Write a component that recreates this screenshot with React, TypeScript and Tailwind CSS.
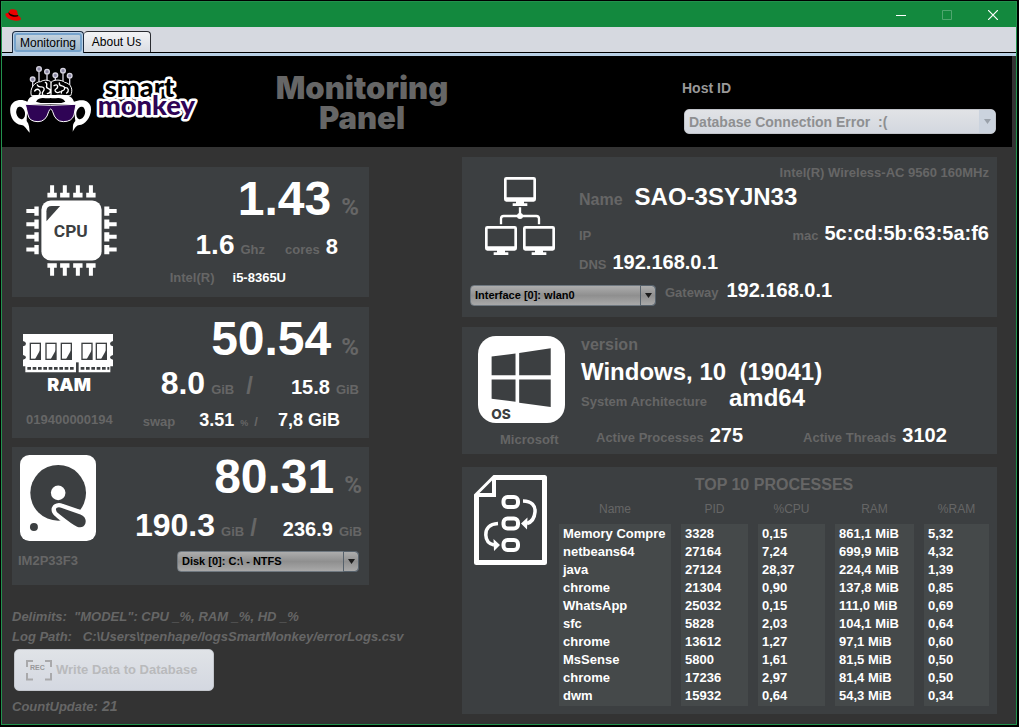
import type { ReactNode } from "react";

type Process = [name: string, pid: string, cpu: string, ram: string, ramShare: string];

const processes: Process[] = [
  ["Memory Compre", "3328", "0,15", "861,1 MiB", "5,32"],
  ["netbeans64", "27164", "7,24", "699,9 MiB", "4,32"],
  ["java", "27124", "28,37", "224,4 MiB", "1,39"],
  ["chrome", "21304", "0,90", "137,8 MiB", "0,85"],
  ["WhatsApp", "25032", "0,15", "111,0 MiB", "0,69"],
  ["sfc", "5828", "2,03", "104,1 MiB", "0,64"],
  ["chrome", "13612", "1,27", "97,1 MiB", "0,60"],
  ["MsSense", "5800", "1,61", "81,5 MiB", "0,50"],
  ["chrome", "17236", "2,97", "81,4 MiB", "0,50"],
  ["dwm", "15932", "0,64", "54,3 MiB", "0,34"],
];

function HatIcon() {
  return (
    <svg viewBox="0 0 48 36" className="h-3 w-4" aria-hidden="true">
      <path d="M1 17 Q0 11 10 12 L15 2 Q17 0 24 1 Q34 2 36 5 L39 19 Q48 25 48 30 Q46 36 32 35 Q6 32 1 17Z" fill="#ee0000" />
      <path d="M10 12 Q12 21 26 23 Q38 24 40 21 L39 18 Q34 20 25 18 Q15 16 11 10Z" fill="#1a0000" />
    </svg>
  );
}

function SmartMonkeyLogo() {
  const antennas = [
    [98, 237, 270],
    [117, 206, 262],
    [141, 214, 248],
    [166, 225, 248],
    [189, 211, 252],
    [209, 226, 270],
  ];
  return (
    <svg viewBox="30 194 564 207" className="h-[69px] w-[188px] shrink-0" role="img" aria-label="Smart Monkey">
      {antennas.map(([x, y, end]) => (
        <g key={x} stroke="#d6d4e0">
          <path d={`M${x} ${y + 8}V${end}`} strokeWidth="4" />
          <circle cx={x} cy={y} r="7" fill="#8a87a3" strokeWidth="4" />
        </g>
      ))}
      <path d="M94 286C88 264 104 244 122 244C134 236 150 240 153 246C162 236 186 238 194 246C214 250 220 268 212 286Z" fill="#000" stroke="#fff" strokeWidth="3" />
      <path
        d="M104 272c10-14 22 4 14 10M112 254c4 12 16 0 20 10s-10 10-4 18M136 246c12 4-4 14 8 18s8 14-2 16M153 246v36M162 256c12-8 14 6 6 10s2 16 12 8M178 248c-2 14 16 4 16 16s-12 2-10 14M196 262c10 0 12 10 4 16"
        fill="none"
        stroke="#fff"
        strokeWidth="4"
        strokeLinecap="round"
      />
      <path
        d="M82 304C92 276 128 286 152 283C178 286 212 276 222 304C238 298 264 294 272 318C278 346 256 374 238 374C230 374 224 384 218 394C220 380 216 372 226 362L220 312H82L80 362C88 372 88 384 89 397C80 388 74 374 64 374C40 372 28 346 31 322C36 298 64 294 82 304Z"
        fill="#fff"
      />
      <path d="M108 304C118 286 136 296 152 293C168 296 184 286 196 304L184 308H122Z" fill="#000" />
      <ellipse cx="62" cy="338" rx="13" ry="19" fill="#000" transform="rotate(-14 62 338)" />
      <ellipse cx="242" cy="338" rx="13" ry="19" fill="#000" transform="rotate(14 242 338)" />
      <path d="M88 322H218L212 366L190 372H164L151 332L138 372H108L86 362Z" fill="#000" />
      <path
        d="M76 312Q152 318 228 312L222 344Q216 364 190 364Q166 364 158 334Q152 318 146 334Q138 364 114 364Q88 364 84 344Z"
        fill="#2f0455"
        stroke="#fff"
        strokeWidth="3"
      />
      <g fontFamily="Lato, 'Liberation Sans', sans-serif" fontWeight="900" stroke="#fff" strokeWidth="15" strokeLinejoin="round" paintOrder="stroke">
        <text x="314" y="289" fontSize="82" fill="#000">smart</text>
        <text x="293" y="345" fontSize="82" fill="#2f0455">monkey</text>
      </g>
    </svg>
  );
}

function CpuIcon() {
  const across = [158, 196, 235, 274];
  const down = [182, 221, 259, 297];
  return (
    <svg viewBox="80 104 272 272" className="size-[91px] shrink-0" role="img" aria-label="CPU">
      <g fill="#fff">
        {across.map((x) => (
          <path key={x} d={`M${x - 6} 105h12v22h8v14h-28v-14h8zM${x - 14} 338h28v13h-8v24h-12v-24h-8z`} />
        ))}
        {down.map((y) => (
          <path key={y} d={`M81 ${y - 6}h24v-8h13v28h-13v-8h-24zM314 ${y - 14}h15v8h22v12h-22v8h-15z`} />
        ))}
        <rect x="126" y="150" width="180" height="180" rx="28" />
      </g>
      <path d="M141 212V183Q141 167 157 167H182Z" fill="#3c3f41" />
      <text x="163" y="258" fontSize="52" fontWeight="700" fontFamily="Roboto, sans-serif" fill="#3c3f41">CPU</text>
    </svg>
  );
}

function RamIcon() {
  return (
    <svg viewBox="69 101 270 180" className="h-[60px] w-[90px] shrink-0 overflow-visible" role="img" aria-label="RAM">
      <path
        d="M69 101H339V122Q330 124 330 130T339 138V164Q330 166 330 171T339 178V198H331V216H76V198H69V178Q78 176 78 171T69 164V138Q78 136 78 130T69 122Z"
        fill="#fff"
      />
      <path d="M232 186V218" stroke="#3c3f41" strokeWidth="8" />
      {[89, 136, 182, 244, 287].map((x) => (
        <g key={x}>
          <rect x={x + 2} y="129" width="30" height="48" fill="#fff" stroke="#3c3f41" strokeWidth="4" />
          <path d={`M${x + 32} 148V177H${x + 16}Z`} fill="#3c3f41" />
        </g>
      ))}
      <path d="M82 204H222M242 204H328" stroke="#3c3f41" strokeWidth="8" strokeDasharray="11 5" />
      <text x="142" y="271" fontSize="54" fontWeight="900" fontFamily="Inter, 'Liberation Sans', sans-serif" fill="#fff">
        RAM
      </text>
    </svg>
  );
}

function DiskIcon() {
  return (
    <svg viewBox="60 44 229 259" className="h-[86px] w-[76px] shrink-0" aria-hidden="true">
      <rect x="60" y="44" width="229" height="259" rx="28" fill="#fff" />
      <circle cx="175" cy="158" r="84" fill="#3c3f41" />
      <circle cx="175" cy="158" r="22" fill="#fff" />
      <path
        d="M170 204Q176 200 184 203L242 223Q262 232 257 250Q250 266 232 260Q220 256 178 222Q164 212 170 204Z"
        fill="#3c3f41"
        stroke="#fff"
        strokeWidth="26"
        strokeLinejoin="round"
        paintOrder="stroke"
      />
      <circle cx="102" cy="261" r="12" fill="#3c3f41" />
    </svg>
  );
}

function Monitor({ x, y }: { x: number; y: number }) {
  return (
    <g>
      <rect x={x + 4} y={y + 4} width="88" height="66" rx="3" fill="none" stroke="#fff" strokeWidth="8" />
      <path d={`M${x + 4} ${y + 61}h88v10h-88zM${x + 36} ${y + 72}h24v7h10v8h-44v-8h10z`} fill="#fff" />
    </g>
  );
}

function NetworkIcon() {
  return (
    <svg viewBox="90 81 210 234" className="h-[78px] w-[70px] shrink-0" aria-hidden="true">
      <Monitor x={147} y={81} />
      <Monitor x={90} y={228} />
      <Monitor x={204} y={228} />
      <path d="M195 172V198M138 223V206Q138 198 146 198H244Q252 198 252 206V223" fill="none" stroke="#fff" strokeWidth="7" />
      <circle cx="195" cy="198" r="9" fill="#fff" />
    </svg>
  );
}

function WindowsIcon() {
  return (
    <svg viewBox="69 48 262 262" className="size-[87px] shrink-0" role="img" aria-label="OS">
      <rect x="69" y="48" width="262" height="262" rx="54" fill="#fff" />
      <path d="M110 110L182 101V166H110ZM193 99L288 85V166H193ZM110 179H182V246L110 237ZM193 179H288V262L193 249Z" fill="#3c3f41" />
      <text x="109" y="299" fontSize="41" fontWeight="800" fontFamily="Inter, 'Liberation Sans', sans-serif" fill="#3c3f41">
        OS
      </text>
    </svg>
  );
}

function ProcessIcon() {
  return (
    <svg viewBox="0 0 73 90" className="h-[90px] w-[73px] shrink-0" fill="none" stroke="#fff" aria-hidden="true">
      <path d="M20 2.5H70.5V87.5H2.5V20" strokeWidth="5" strokeLinejoin="round" />
      <path d="M1.500 20L20 1.500" strokeWidth="3" strokeLinecap="round" />
      <path d="M20 3V20H3" strokeWidth="4" />
      {[27, 48.5, 70].map((y) => (
        <rect key={y} x="29.500" y={y - 5} width="14.500" height="10" rx="4" strokeWidth="4" />
      ))}
      <path d="M49 26C58 26 61.500 31 61 37C60.500 43 58 47 53 48.500" strokeWidth="3.500" />
      <path d="M24 48.500C15 49 11.500 54 11.800 60C12 66 15 69 20 70" strokeWidth="3.500" />
      <path d="M47 48.500L53.500 42.500L53 54.500ZM26 70L19.500 64L20 76Z" fill="#fff" stroke="none" />
    </svg>
  );
}

function RecordIcon() {
  return (
    <svg viewBox="0 0 26 21" className="h-[21px] w-[26px] shrink-0" fill="none" stroke="#a9a9ab" strokeWidth="2" aria-hidden="true">
      <path d="M1 7V1H7M19 1H25V7M25 13V19.500H19M7 19.500H1V13" />
      <text x="4" y="10" fontSize="7" fontWeight="700" fontFamily="'Liberation Sans', sans-serif" fill="#98989a" stroke="none">REC</text>
    </svg>
  );
}

function Label({ children, className = "" }: { children: ReactNode; className?: string }) {
  return <span className={`text-[13px] leading-none text-[#666666] ${className}`}>{children}</span>;
}

function Percent() {
  return <span className="font-[Roboto,'Liberation_Sans',sans-serif] text-2xl leading-none text-[#666666]">%</span>;
}

function DarkSelect({ label, value, className }: { label: string; value: string; className: string }) {
  return (
    <div className={`relative h-[21px] ${className}`}>
      <select
        aria-label={label}
        className="block size-full appearance-none rounded-[4px] border border-[#6f7880] bg-linear-to-b from-[#adadad] via-[#8f8f8f] to-[#a9a9a9] pl-1 text-[11px] font-bold text-black"
      >
        <option>{value}</option>
      </select>
      <span className="pointer-events-none absolute inset-y-0 right-0 flex w-4 items-center justify-center rounded-r-[4px] border border-[#56616b]">
        <svg viewBox="0 0 7 5" className="h-[5px] w-[7px]" aria-hidden="true">
          <path d="M0 0H7L3.500 5Z" fill="#1c1c1c" />
        </svg>
      </span>
    </div>
  );
}

function TitleBar() {
  return (
    <header className="flex h-[25px] items-stretch bg-[#13893e] pl-[3px] text-white">
      <div className="flex items-center">
        <HatIcon />
      </div>
      <div className="ml-auto flex">
        <button type="button" aria-label="Minimize" className="flex w-[46px] items-center justify-center">
          <svg viewBox="0 0 10 10" className="size-[10px]"><path d="M0 5.500H10" stroke="#fff" /></svg>
        </button>
        <button type="button" aria-label="Maximize" disabled className="flex w-[46px] items-center justify-center">
          <svg viewBox="0 0 10 10" className="size-[10px]"><path d="M.5.5H9.500V9.500H.5Z" fill="none" stroke="#4fa66f" /></svg>
        </button>
        <button type="button" aria-label="Close" className="flex w-[46px] items-center justify-center">
          <svg viewBox="0 0 10 10" className="size-[10px]"><path d="M0 0L10 10M10 0L0 10" stroke="#fff" strokeWidth="1.200" /></svg>
        </button>
      </div>
    </header>
  );
}

function Tabs() {
  return (
    <nav role="tablist" className="flex h-[26px] items-end border-b border-black bg-[#d6d9e0] pl-[10px] text-xs text-black">
      <button
        type="button"
        role="tab"
        aria-selected="true"
        className="-mb-px h-[22px] w-[72px] rounded-t-[4px] border border-b-0 border-[#1c2b40] bg-[#b8cfe5] p-px"
      >
        <span className="flex h-full items-center justify-center rounded-[3px] border-2 border-[#76a3cc] bg-linear-to-b from-[#c3d2de] to-[#9fb7ca]">
          Monitoring
        </span>
      </button>
      <button
        type="button"
        role="tab"
        aria-selected="false"
        className="h-[21px] w-[67px] rounded-t-[4px] border border-b-0 border-l-0 border-[#2a2c31] bg-linear-to-b from-[#f3f4f6] to-[#dadde3] pr-px"
      >
        About Us
      </button>
    </nav>
  );
}

function Banner() {
  return (
    <section className="mr-1 flex h-[91px] items-start bg-black pt-[9px] pr-4 pl-2">
      <SmartMonkeyLogo />
      <h1 className="mt-2 ml-[74px] w-[180px] text-center font-[Inter,'Liberation_Sans',sans-serif] text-[31px] leading-[30px] font-black text-[#666666]">
        Monitoring Panel
      </h1>
      <div className="mt-[14px] ml-auto w-[314px]">
        <label htmlFor="host" className="block text-sm leading-[18px] font-bold text-[#999999]">
          Host ID
        </label>
        <div className="relative mt-3 ml-[2px] h-[25px]">
          <select
            id="host"
            disabled
            className="block size-full appearance-none rounded-[5px] border border-[#c0c3c9] bg-linear-to-b from-[#e1e3e6] to-[#d3d7df] pl-1 text-sm font-bold text-[#8e8f91] opacity-100"
          >
            <option>Database Connection Error&nbsp; :(</option>
          </select>
          <span className="pointer-events-none absolute inset-y-px right-px flex w-4 items-center justify-center rounded-r-[4px] bg-[#cbd3de]">
            <svg viewBox="0 0 7 5" className="h-[5px] w-[7px]" aria-hidden="true">
              <path d="M0 0H7L3.500 5Z" fill="#9aa1aa" />
            </svg>
          </span>
        </div>
      </div>
    </section>
  );
}

function CpuCard() {
  return (
    <section className="flex h-[130px] justify-between bg-[#3c3f41] pl-[14px]">
      <div className="pt-[18px]">
        <CpuIcon />
      </div>
      <div className="flex flex-col items-end pt-2">
        <p className="flex items-baseline gap-[10px] pr-[10px] text-5xl leading-[48px]">
          1.43 <Percent />
        </p>
        <p className="mt-2 flex items-baseline pr-[31px] text-[28px] leading-7">
          1.6 <Label className="ml-[6px]">Ghz</Label>
          <Label className="ml-5">cores</Label>
          <span className="ml-[6px] text-[22px] leading-none">8</span>
        </p>
        <p className="mt-[11px] flex items-baseline gap-[18px] pr-[83px] text-[13px] leading-4">
          <Label>Intel(R)</Label> i5-8365U
        </p>
      </div>
    </section>
  );
}

function RamCard() {
  return (
    <section className="mt-[10px] flex h-[131px] justify-between bg-[#3c3f41] pl-[11px]">
      <div className="pt-[27px]">
        <RamIcon />
        <p className="mt-[18px] ml-[3px] text-[13px] leading-4 text-[#666666]">019400000194</p>
      </div>
      <div className="flex flex-col items-end pt-2 pr-[10px]">
        <p className="flex items-baseline gap-[10px] text-5xl leading-[48px]">
          50.54 <Percent />
        </p>
        <p className="mt-1 flex items-baseline text-[32px] leading-8">
          8.0 <Label className="ml-[6px]">GiB</Label>
          <span className="ml-3 text-2xl leading-none text-[#666666]">/</span>
          <span className="ml-[38px] text-xl leading-none">15.8</span>
          <Label className="ml-[6px]">GiB</Label>
        </p>
        <p className="mt-3 flex items-baseline pr-[19px] text-lg leading-[18px]">
          <Label>swap</Label>
          <span className="ml-6">3.51</span>
          <span className="ml-[6px] text-[9px] leading-none text-[#666666]">%</span>
          <Label className="ml-[6px]">/</Label>
          <span className="ml-5">7,8 GiB</span>
        </p>
      </div>
    </section>
  );
}

function DiskCard() {
  return (
    <section className="mt-[9px] flex h-[138px] justify-between bg-[#3c3f41] pl-[6px]">
      <div className="pt-2 pl-[2px]">
        <DiskIcon />
        <p className="mt-3 -ml-[2px] text-[13px] leading-4 text-[#666666]">IM2P33F3</p>
      </div>
      <div className="flex flex-col items-end pt-[6px] pr-[7px]">
        <p className="flex items-baseline gap-[10px] text-5xl leading-[48px]">
          80.31 <Percent />
        </p>
        <p className="mt-2 flex items-baseline text-[32px] leading-8">
          190.3 <Label className="ml-[6px]">GiB</Label>
          <span className="ml-[6px] text-2xl leading-none text-[#666666]">/</span>
          <span className="ml-[26px] text-xl leading-none">236.9</span>
          <Label className="ml-[6px]">GiB</Label>
        </p>
        <DarkSelect label="Disk" value="Disk [0]: C:\ - NTFS" className="mt-[10px] mr-[3px] w-[182px]" />
      </div>
    </section>
  );
}

function LogSection() {
  return (
    <section className="mt-[22px] text-[13px] leading-5 text-[#666666]">
      <p className="whitespace-pre italic">{'Delimits:  "MODEL": CPU _%, RAM _%, HD _%'}</p>
      <p className="whitespace-pre italic">{"Log Path:   C:\\Users\\tpenhape/logsSmartMonkey/errorLogs.csv"}</p>
      <button
        type="button"
        disabled
        className="mt-[2px] ml-[2px] flex h-[42px] w-[200px] items-center gap-1 rounded-[5px] border border-[#c3c6cc] bg-linear-to-b from-[#e0e3e7] to-[#d4d8e1] pl-[11px] text-[13px] font-bold text-[#b9babc]"
      >
        <RecordIcon />
        Write Data to Database
      </button>
      <p className="mt-[6px] flex items-baseline gap-1 italic">
        CountUpdate: <span className="text-sm leading-none">21</span>
      </p>
    </section>
  );
}

function NetworkCard() {
  return (
    <section className="h-[160px] bg-[#3c3f41]">
      <div className="flex gap-6 pr-2 pl-[23px]">
        <div className="pt-5">
          <NetworkIcon />
        </div>
        <div className="flex-1 pt-2">
          <p className="text-right text-[13px] leading-4 text-[#666666]">Intel(R) Wireless-AC 9560 160MHz</p>
          <p className="mt-1 flex items-baseline gap-3 text-2xl leading-6">
            <span className="text-base leading-none text-[#666666]">Name</span> SAO-3SYJN33
          </p>
          <div className="mt-[14px] flex items-baseline justify-between text-xl leading-5">
            <Label>IP</Label>
            <p className="flex items-baseline gap-[6px]">
              <Label>mac</Label> 5c:cd:5b:63:5a:f6
            </p>
          </div>
          <p className="mt-[9px] flex items-baseline gap-[6px] text-xl leading-5">
            <Label>DNS</Label> 192.168.0.1
          </p>
        </div>
      </div>
      <div className="mt-2 flex items-start gap-[9px] pl-2">
        <DarkSelect label="Interface" value="Interface [0]: wlan0" className="mt-[5px] w-[186px]" />
        <p className="flex items-baseline gap-2 text-xl leading-5">
          <Label>Gateway</Label> 192.168.0.1
        </p>
      </div>
    </section>
  );
}

function SystemCard() {
  return (
    <section className="mt-[10px] flex h-[127px] gap-4 bg-[#3c3f41] pt-[9px] pl-4">
      <div>
        <WindowsIcon />
        <p className="mt-[9px] pl-[22px] text-[13px] leading-4 text-[#666666]">Microsoft</p>
      </div>
      <div className="flex-1 pt-px">
        <p className="text-base leading-4 text-[#666666]">version</p>
        <p className="mt-[7px] text-2xl leading-6 whitespace-pre">{"Windows, 10  (19041)"}</p>
        <p className="mt-[2px] flex items-baseline gap-[22px] text-2xl leading-6">
          <Label>System Architecture</Label> amd64
        </p>
        <div className="mt-[15px] ml-[15px] flex gap-[60px] text-xl leading-5">
          <p className="flex items-baseline gap-[6px]">
            <Label>Active Processes</Label> 275
          </p>
          <p className="flex items-baseline gap-[6px]">
            <Label>Active Threads</Label> 3102
          </p>
        </div>
      </div>
    </section>
  );
}

function ProcessCard() {
  const gap = "border-r-[10px] border-transparent bg-clip-padding last:border-r-0";
  return (
    <section className="mt-[13px] flex gap-3 bg-[#3c3f41] pt-2 pr-2 pb-2 pl-3">
      <ProcessIcon />
      <div className="flex-1 pt-[2px]">
        <h2 className="text-center text-base leading-4 text-[#666666]">TOP 10 PROCESSES</h2>
        <table className="w-full table-fixed border-separate border-spacing-0 text-[13px] leading-[18px]">
          <colgroup>
            <col className="w-[122px]" />
            <col className="w-[77px]" />
            <col className="w-[77px]" />
            <col className="w-[89px]" />
            <col />
          </colgroup>
          <thead>
            <tr className="h-[31px] text-xs text-[#666666]">
              {["Name", "PID", "%CPU", "RAM", "%RAM"].map((title) => (
                <th key={title} scope="col" className={`p-0 text-center font-normal ${gap}`}>
                  {title}
                </th>
              ))}
            </tr>
          </thead>
          <tbody>
            {processes.map((row) => (
              <tr key={row[1]} className="group">
                {row.map((cell, column) => (
                  <td
                    key={column}
                    className={`bg-[#45494a] p-0 pl-1 whitespace-nowrap group-first:pt-px group-last:pb-px ${gap}`}
                  >
                    {cell}
                  </td>
                ))}
              </tr>
            ))}
          </tbody>
        </table>
      </div>
    </section>
  );
}

export default function App() {
  return (
    <div className="flex min-h-screen flex-col bg-black pt-px pr-[2px] pb-[2px] pl-px font-['Liberation_Sans',Arial,sans-serif]">
      <div className="flex flex-1 flex-col border border-[#22914d] bg-[#333333]">
        <TitleBar />
        <Tabs />
        <div className="h-[3px] bg-[#b8cfe5]" />
        <Banner />
        <main className="flex gap-[93px] pr-[19px] pl-[10px] font-bold text-white">
          <div className="w-[357px] shrink-0 pt-5">
            <CpuCard />
            <RamCard />
            <DiskCard />
            <LogSection />
          </div>
          <div className="min-w-0 flex-1 py-[10px]">
            <NetworkCard />
            <SystemCard />
            <ProcessCard />
          </div>
        </main>
      </div>
    </div>
  );
}
